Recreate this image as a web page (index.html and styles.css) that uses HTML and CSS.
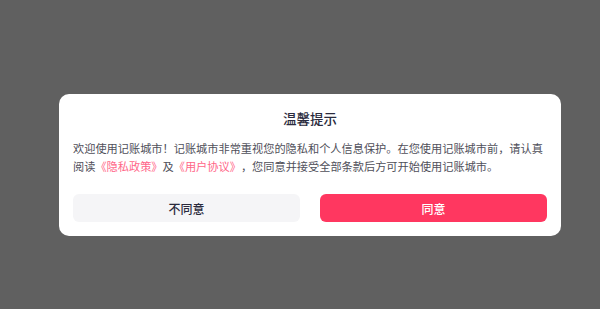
FILE: index.html
```html
<!DOCTYPE html>
<html lang="zh-CN">
<head>
<meta charset="utf-8">
<title>温馨提示</title>
<link rel="stylesheet" href="styles.css">
</head>
<body>
<div class="overlay">
  <div class="dialog">
    <div class="title">温馨提示</div>
    <p class="content">欢迎使用记账城市！记账城市非常重视您的隐私和个人信息保护。在您使用记账城市前，请认真阅读<span class="link">《隐私政策》</span>及<span class="link">《用户协议》</span>，您同意并接受全部条款后方可开始使用记账城市。</p>
    <div class="actions">
      <button class="btn btn-cancel">不同意</button>
      <button class="btn btn-ok">同意</button>
    </div>
  </div>
</div>
</body>
</html>
```

FILE: styles.css
```css
html, body {
  margin: 0;
  padding: 0;
  width: 600px;
  height: 309px;
  overflow: hidden;
  background: #606060;
  font-family: "Noto Sans CJK SC", "Noto Sans", sans-serif;
}
.overlay {
  padding-top: 94px;
  padding-left: 59px;
}
.dialog {
  width: 502px;
  box-sizing: border-box;
  background: #ffffff;
  border-radius: 10px;
  padding: 14px 14px 14px;
}
.title {
  text-align: center;
  font-size: 13.5px;
  line-height: 20px;
  font-weight: 500;
  color: #2b2b3d;
}
.content {
  margin: 11px 0 0;
  font-size: 11.2px;
  line-height: 18px;
  color: #4f4f5a;
  text-spacing-trim: space-all;
}
.link {
  color: #ff6688;
}
.actions {
  display: flex;
  gap: 20px;
  margin-top: 19px;
}
.btn {
  flex: 1;
  height: 28px;
  border: none;
  border-radius: 6px;
  font-family: inherit;
  font-size: 12px;
  font-weight: 500;
  padding: 0;
  cursor: pointer;
}
.btn-cancel {
  background: #f5f5f7;
  color: #2b2b3d;
}
.btn-ok {
  background: #ff3760;
  color: #ffffff;
}
```
